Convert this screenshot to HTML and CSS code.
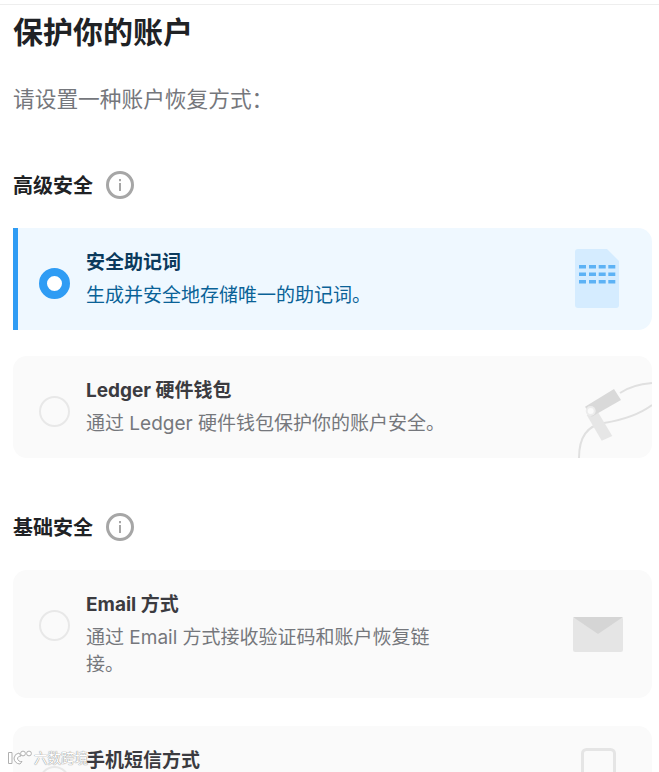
FILE: index.html
```html
<!DOCTYPE html>
<html lang="zh-CN">
<head>
    <meta charset="UTF-8">
    <meta name="viewport" content="width=device-width, initial-scale=1.0">
    <title>保护你的账户</title>
    <link rel="stylesheet" href="styles.css">
</head>
<body>

    <div class="container">
        <h1>保护你的账户</h1>
        <p class="intro">请设置一种账户恢复方式：</p>

        <div class="section-title">
            <span>高级安全</span>
            <svg class="info" width="28" height="28" viewBox="0 0 28 28">
                <circle cx="14" cy="14" r="12.5" fill="none" stroke="#a6a6a6" stroke-width="3"/>
                <rect x="13" y="12" width="2" height="8" fill="#a6a6a6"/>
                <rect x="13" y="8" width="2" height="2.2" fill="#a6a6a6"/>
            </svg>
        </div>

        <div class="option selected">
            <div class="radio"></div>
            <div class="option-text">
                <div class="option-title">安全助记词</div>
                <div class="option-desc">生成并安全地存储唯一的助记词。</div>
            </div>
            <svg class="art" width="100" height="102" viewBox="0 0 100 102">
                <path d="M26 21H55L67 33V77a3 3 0 0 1-3 3H26a3 3 0 0 1-3-3V24a3 3 0 0 1 3-3Z" fill="#d5ecff"/>
                <g fill="#5db2f5">
                    <rect x="27" y="37" width="7" height="3.5"/>
                    <rect x="37" y="37" width="7" height="3.5"/>
                    <rect x="46.7" y="37" width="7" height="3.5"/>
                    <rect x="56.3" y="37" width="7" height="3.5"/>
                    <rect x="27" y="44.5" width="7" height="3.5"/>
                    <rect x="37" y="44.5" width="7" height="3.5"/>
                    <rect x="46.7" y="44.5" width="7" height="3.5"/>
                    <rect x="56.3" y="44.5" width="7" height="3.5"/>
                    <rect x="27" y="52" width="7" height="3.5"/>
                    <rect x="37" y="52" width="7" height="3.5"/>
                    <rect x="46.7" y="52" width="7" height="3.5"/>
                    <rect x="56.3" y="52" width="7" height="3.5"/>
                </g>
            </svg>
        </div>

        <div class="option">
            <div class="radio"></div>
            <div class="option-text">
                <div class="option-title">Ledger 硬件钱包</div>
                <div class="option-desc">通过 Ledger 硬件钱包保护你的账户安全。</div>
            </div>
            <svg class="art" width="100" height="102" viewBox="0 0 100 102">
                <g fill="none" stroke="#e0e0e0" stroke-width="2">
                    <path d="M68 37C78 30 88 28 100 27"/>
                    <path d="M100 49C88 58 70 64 52 67C38 69 27 78 27 102"/>
                </g>
                <path d="M44.7 54L60.3 80L49.7 84.7L34.7 59Z" fill="#e6e6e6"/>
                <path d="M62 33L69 44L39.7 60.7L33 50.7Z" fill="#d9d9d9"/>
                <circle cx="38.7" cy="55" r="5" fill="#ececec"/>
                <circle cx="38.7" cy="55" r="3" fill="#fafafa"/>
            </svg>
        </div>

        <div class="section-title second">
            <span>基础安全</span>
            <svg class="info" width="28" height="28" viewBox="0 0 28 28">
                <circle cx="14" cy="14" r="12.5" fill="none" stroke="#a6a6a6" stroke-width="3"/>
                <rect x="13" y="12" width="2" height="8" fill="#a6a6a6"/>
                <rect x="13" y="8" width="2" height="2.2" fill="#a6a6a6"/>
            </svg>
        </div>

        <div class="option">
            <div class="radio"></div>
            <div class="option-text">
                <div class="option-title">Email 方式</div>
                <div class="option-desc">通过 Email 方式接收验证码和账户恢复链接。</div>
            </div>
            <svg class="art" width="100" height="102" viewBox="0 0 100 102">
                <rect x="21" y="47" width="50" height="35" rx="2" fill="#e5e5e5"/>
                <path d="M21 47H71L46 64Z" fill="#d5d5d5"/>
            </svg>
        </div>

        <div class="option">
            <div class="radio"></div>
            <div class="option-text">
                <div class="option-title">手机短信方式</div>
            </div>
            <svg class="art" width="100" height="102" viewBox="0 0 100 102">
                <rect x="30.5" y="23.5" width="32" height="60" rx="4" fill="none" stroke="#e5e5e5" stroke-width="3"/>
            </svg>
        </div>
    </div>

    <div class="watermark">
        <svg width="26" height="16" viewBox="0 0 26 16">
            <g fill="#ffffff" stroke="#b0b0b0" stroke-width="1">
                <path d="M1.5 2.5H5V13.5H1.5Z"/>
                <path d="M12 3A6 6 0 0 0 7 8A6 6 0 0 0 13 14L15 11.5A3.5 3.5 0 0 1 10.5 8A3.5 3.5 0 0 1 14 6Z"/>
                <circle cx="16" cy="3.5" r="2.4"/>
                <circle cx="22" cy="3.5" r="2.4"/>
            </g>
        </svg>
        <span>六数跨境</span>
    </div>

</body>
</html>
```

FILE: styles.css
```css
html, body {
    margin: 0;
    height: 100%;
    overflow: hidden;
}

body {
    font-family: 'Inter', 'Noto Sans CJK SC', sans-serif;
    background-color: #ffffff;
    color: #202225;
}

.container {
    margin-top: 4px;
    border-top: 1px solid #eeeeee;
    padding: 7px 7px 0 13px;
}

h1 {
    margin: 0;
    font-size: 30px;
    line-height: 40px;
    font-weight: 700;
}

.intro {
    margin: 32px 0 0;
    font-size: 21.7px;
    line-height: 30px;
    color: #75777c;
}

.section-title {
    display: flex;
    align-items: center;
    gap: 13px;
    margin: 56px 0 28px;
    font-size: 20px;
    line-height: 28px;
    font-weight: 700;
}

.section-title span {
    padding-top: 2px;
}

.section-title.second {
    margin-top: 54px;
}

.second ~ .option {
    margin-bottom: 28px;
}

.option {
    display: flex;
    align-items: flex-start;
    margin-bottom: 26px;
    border-left: 5px solid transparent;
    border-radius: 14px;
    background-color: #fafafa;
    overflow: hidden;
}

.option.selected {
    border-left-color: #2f9cf4;
    border-radius: 0 14px 14px 0;
    background-color: #eff8ff;
}

.radio {
    flex: none;
    box-sizing: border-box;
    width: 31px;
    height: 31px;
    margin: 39.5px 16px 0 21px;
    border: 2px solid #e8e8e8;
    border-radius: 50%;
}

.selected .radio {
    border: 8px solid #2f9cf4;
    background-color: #ffffff;
}

.option-text {
    width: 360px;
    padding: 24px 0 20px;
}

.option-title {
    font-size: 19px;
    line-height: 22px;
    font-weight: 700;
    color: #3b3b40;
}

.option-desc {
    margin-top: 8px;
    font-size: 19px;
    line-height: 27px;
    color: #75777c;
}

.selected .option-title {
    color: #0b3a5c;
}

.selected .option-desc {
    color: #0a6297;
}

.art {
    flex: none;
    margin-left: auto;
}

.watermark {
    position: absolute;
    left: 7px;
    top: 749px;
    display: flex;
    align-items: center;
    gap: 1px;
    font-size: 13.5px;
    line-height: 18px;
    color: #ffffff;
    text-shadow: 0 0 1px #8c8c8c, 0 0 1px #8c8c8c;
}
```
